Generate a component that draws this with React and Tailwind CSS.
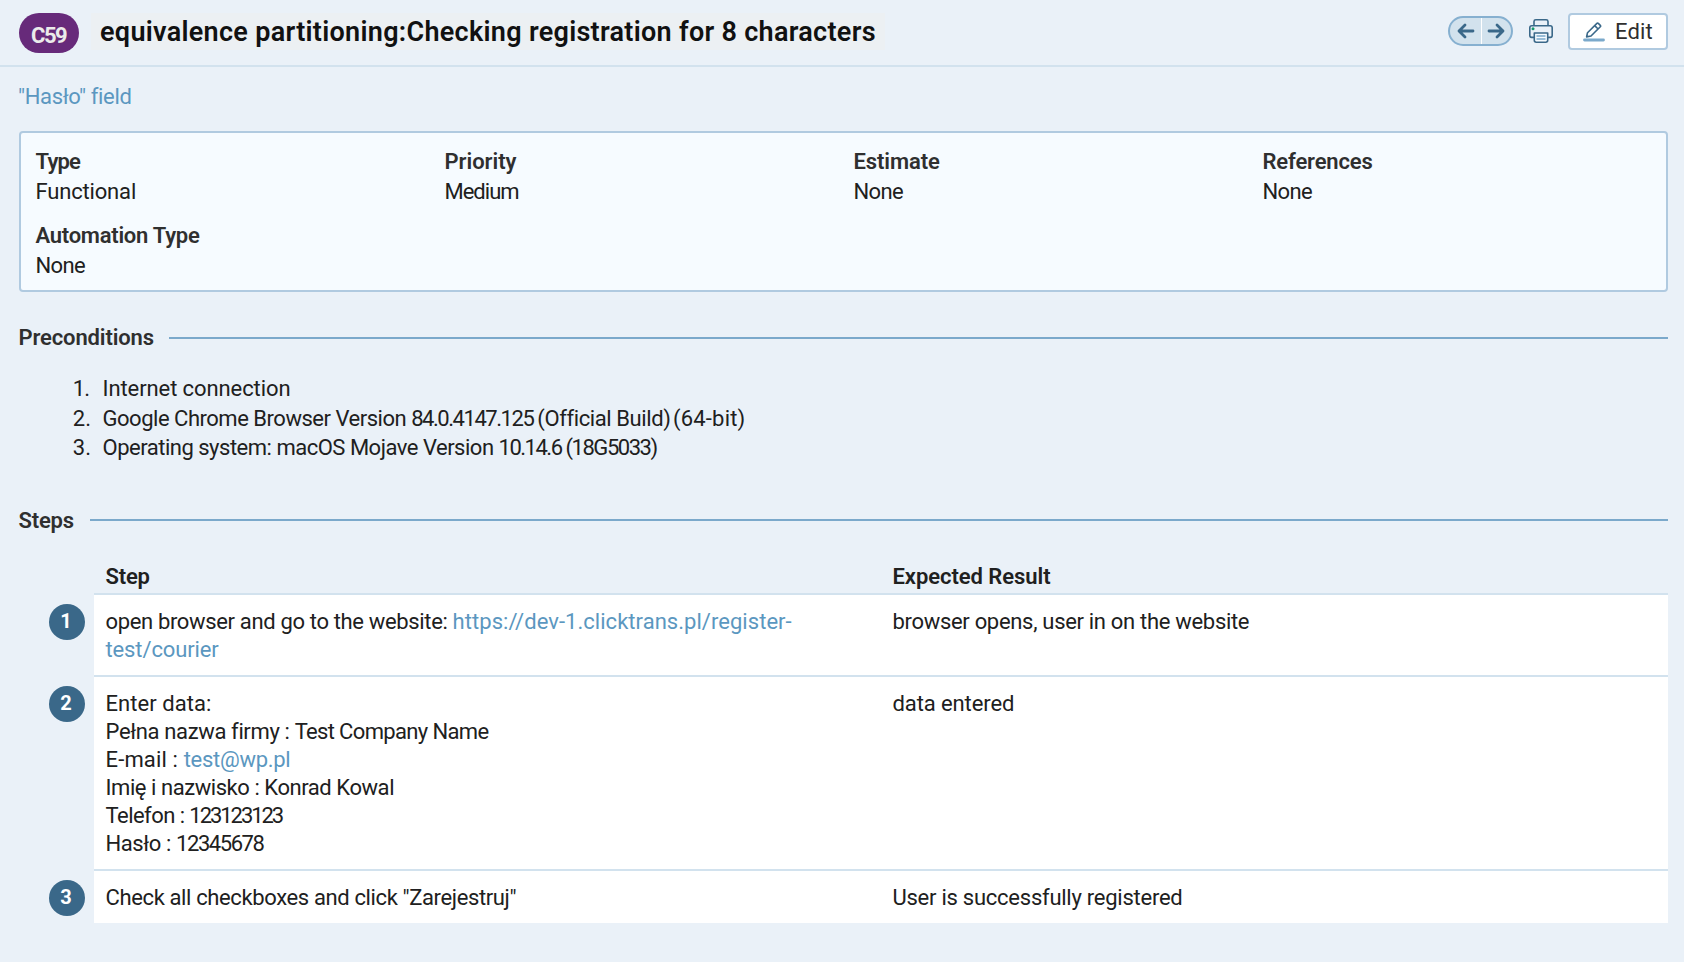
import React from "react";

function SectionTitle({ children, className }) {
  return (
    <div className="flex h-[30px] items-center">
      <h2 className={`font-semibold leading-[30px] text-[#2f2f2f] ${className}`}>{children}</h2>
      <div className="h-[2px] flex-1 bg-[#7ba9cb]" />
    </div>
  );
}

function Field({ label, value, labelClass, valueClass }) {
  return (
    <div className="leading-[30px]">
      <div className={`font-semibold text-[#2f2f2f] ${labelClass}`}>{label}</div>
      <div className={valueClass}>{value}</div>
    </div>
  );
}

function StepRow({ number, children, result, resultClass }) {
  return (
    <div className="flex">
      <div className="w-[75px] pl-[30px] pt-[11px]">
        <div className="flex h-9 w-9 justify-center rounded-full bg-[#3a6889] pr-[2px] text-[20px] font-bold leading-[34px] text-white">
          {number}
        </div>
      </div>
      <div className="grid flex-1 grid-cols-2 border-t-2 border-[#d2e2ee] bg-white pb-[11px] pt-[13px] leading-7">
        <div className="pl-[11.5px]">{children}</div>
        <div className={`pl-[11.5px] ${resultClass}`}>{result}</div>
      </div>
    </div>
  );
}

function Arrow({ right }) {
  return (
    <svg width="18" height="18" viewBox="0 0 18 18" fill="none" stroke="#3a6889" strokeWidth="2.8" strokeLinecap="round" strokeLinejoin="round">
      {right ? <path d="M2 9h14M10 3l6 6-6 6" /> : <path d="M16 9H2M8 3L2 9l6 6" />}
    </svg>
  );
}

function Printer() {
  return (
    <svg width="24" height="24" viewBox="0 0 24 24" fill="none" stroke="#3a6889" strokeWidth="1.6" strokeLinejoin="round">
      <path d="M5 18.4H2.6a1.9 1.9 0 0 1-1.8-1.9V8.8a2.1 2.1 0 0 1 2-2.1h18.4a2.1 2.1 0 0 1 2 2.1v7.7a1.9 1.9 0 0 1-1.8 1.9H19" />
      <path d="M5 6.7V2.5A1.8 1.8 0 0 1 6.8.8h10.4A1.8 1.8 0 0 1 19 2.5v4.2" />
      <path d="M5.3 14h13.4v7.3a1.9 1.9 0 0 1-1.9 1.9H7.200a1.900 1.900 0 0 1-1.900-1.900z" fill="#f6fbff" />
      <path d="M7.500 17h9M7.500 20h9" stroke="#7ba9cb" />
      <circle cx="4" cy="9.700" r="1.500" fill="#149a6c" stroke="none" />
    </svg>
  );
}

function Pencil() {
  return (
    <svg width="22" height="20" viewBox="0 0 22 20" fill="none" stroke="#3a6889" strokeWidth="1.6" strokeLinejoin="round">
      <path d="M3.6 14.9l.9-4.200 9.400-9.300a1 1 0 0 1 1.400 0l2 2a1 1 0 0 1 0 1.400L8 14z" />
      <path d="M11.700 3.600l3.400 3.400" />
      <path d="M1.500 18h19" stroke="#7ba9cb" strokeWidth="2.800" strokeLinecap="round" />
    </svg>
  );
}

export default function App() {
  return (
    <div className="h-[962px] w-[1684px] overflow-hidden bg-[#eaf1f8] font-['Roboto',sans-serif] text-[22px] text-[#202020]">
      <header className="flex h-[67px] items-start border-b-2 border-[#d2e2ee] pl-[19px] pr-4 pt-[13px]">
        <div className="h-10 w-[60px] rounded-[20px] bg-[#672a7a] pl-3 text-[22px] font-bold leading-[45px] tracking-[-1.5px] text-[#ebebeb]">
          C59
        </div>
        <h1 className="ml-3 h-[37px] w-[794px] whitespace-nowrap bg-[#ecf0f3] pl-[9px] text-[27px] font-semibold leading-[38px] tracking-[0.297px] text-[#111]">
          equivalence partitioning:Checking registration for 8 characters
        </h1>
        <div className="ml-auto flex items-start">
          <div className="mt-[3px] flex h-[30px] w-[65px] overflow-hidden rounded-full border-2 border-[#86b0d0] bg-[#d2e2ed]">
            <button className="flex flex-1 items-center justify-center border-r border-white pl-[2px]">
              <Arrow />
            </button>
            <button className="flex flex-1 items-center justify-center pr-px">
              <Arrow right />
            </button>
          </div>
          <div className="ml-4 mt-[6px]">
            <Printer />
          </div>
          <button className="ml-[15px] flex h-[37px] w-[100px] rounded-[4px] border-2 border-[#b0cae0] bg-white pl-[13px] pt-[7px]">
            <Pencil />
            <span className="-mt-[7px] ml-[10px] leading-[34px] tracking-[0.148px] text-[#2f2f2f]">Edit</span>
          </button>
        </div>
      </header>

      <main className="pl-[19px] pr-4">
        <div className="mt-[14px] h-[50px] leading-[31px] tracking-[-0.35px] text-[#5b97c0]">
          <a className="-ml-px">"Hasło" field</a>
        </div>

        <section className="grid h-[161px] grid-cols-[repeat(4,409px)] content-start gap-y-[14px] rounded-[4px] border-2 border-[#b0cae0] bg-[#f6fbff] pl-[14.5px] pt-[14px]">
          <Field label="Type" value="Functional" labelClass="tracking-[-0.8px]" valueClass="tracking-[-0.17px]" />
          <Field label="Priority" value="Medium" labelClass="tracking-[-0.031px]" valueClass="tracking-[-1px]" />
          <Field label="Estimate" value="None" labelClass="tracking-[-0.092px]" valueClass="tracking-[-0.6px]" />
          <Field label="References" value="None" labelClass="tracking-[-0.152px]" valueClass="tracking-[-0.6px]" />
          <Field label="Automation Type" value="None" labelClass="tracking-[-0.26px]" valueClass="tracking-[-0.6px]" />
        </section>

        <div className="-ml-[0.5px] mt-[31px]">
          <SectionTitle className="mr-[15px] tracking-[-0.13px]">Preconditions</SectionTitle>
        </div>

        <ol className="mt-[21px] h-[89px] leading-[29.5px]">
          <li className="flex gap-[11.5px]">
            <span className="w-[71px] pr-px text-right tracking-[-1px]">1.</span>
            <span className="ml-px tracking-[-0.09px]">Internet connection</span>
          </li>
          <li className="flex gap-[11.5px]">
            <span className="w-[72px] text-right">2.</span>
            <span className="whitespace-pre tracking-[-0.48px]">
              Google Chrome Browser Version <span className="tracking-[-1.45px]">84.0.4147.125 </span>
              <span className="tracking-[-0.4px]">(Official Build)</span>
              <span className="tracking-[-3px]"> </span>
              <span className="tracking-[0.2px]">(64-bit)</span>
            </span>
          </li>
          <li className="flex gap-[11.5px]">
            <span className="w-[72px] text-right">3.</span>
            <span className="whitespace-pre tracking-[-0.49px]">
              Operating system: macOS Mojave Version <span className="tracking-[-1.48px]">10.14.6 (18G5033)</span>
            </span>
          </li>
        </ol>

        <div className="-ml-[0.5px] mt-[42px]">
          <SectionTitle className="mr-[16px] pt-[2px] tracking-[-0.2px]">Steps</SectionTitle>
        </div>

        <section className="mt-[27px]">
          <div className="ml-[75px] grid h-[31px] grid-cols-2 font-semibold leading-[30px]">
            <div className="pl-[11.5px] tracking-[-0.219px]">Step</div>
            <div className="pl-[11.5px] tracking-[-0.052px]">Expected Result</div>
          </div>
          <StepRow number="1" result="browser opens, user in on the website" resultClass="tracking-[-0.31px]">
            <div className="whitespace-nowrap">
              <span className="tracking-[-0.343px]">open browser and go to the website: </span>
              <a className="tracking-[0.039px] text-[#5b97c0]">https://dev-1.clicktrans.pl/register-</a>
            </div>
            <a className="tracking-[-0.12px] text-[#5b97c0]">test/courier</a>
          </StepRow>
          <StepRow number="2" result="data entered" resultClass="tracking-[-0.1px]">
            <div className="tracking-[0.06px]">Enter data:</div>
            <div>
              <span className="tracking-[-0.36px]">Pełna nazwa firmy : </span>
              <span className="tracking-[-0.65px]">Test Company Name</span>
            </div>
            <div className="tracking-[0.15px]">
              E-mail : <a className="tracking-[-0.279px] text-[#5b97c0]">test@wp.pl</a>
            </div>
            <div className="tracking-[-0.44px]">Imię i nazwisko : Konrad Kowal</div>
            <div className="tracking-[-0.55px]">
              Telefon : <span className="tracking-[-2.05px]">123123123</span>
            </div>
            <div className="tracking-[-0.4px]">
              Hasło : <span className="tracking-[-1.45px]">12345678</span>
            </div>
          </StepRow>
          <StepRow number="3" result="User is successfully registered" resultClass="tracking-[-0.25px]">
            <div className="tracking-[-0.37px]">Check all checkboxes and click "Zarejestruj"</div>
          </StepRow>
        </section>
      </main>
    </div>
  );
}
